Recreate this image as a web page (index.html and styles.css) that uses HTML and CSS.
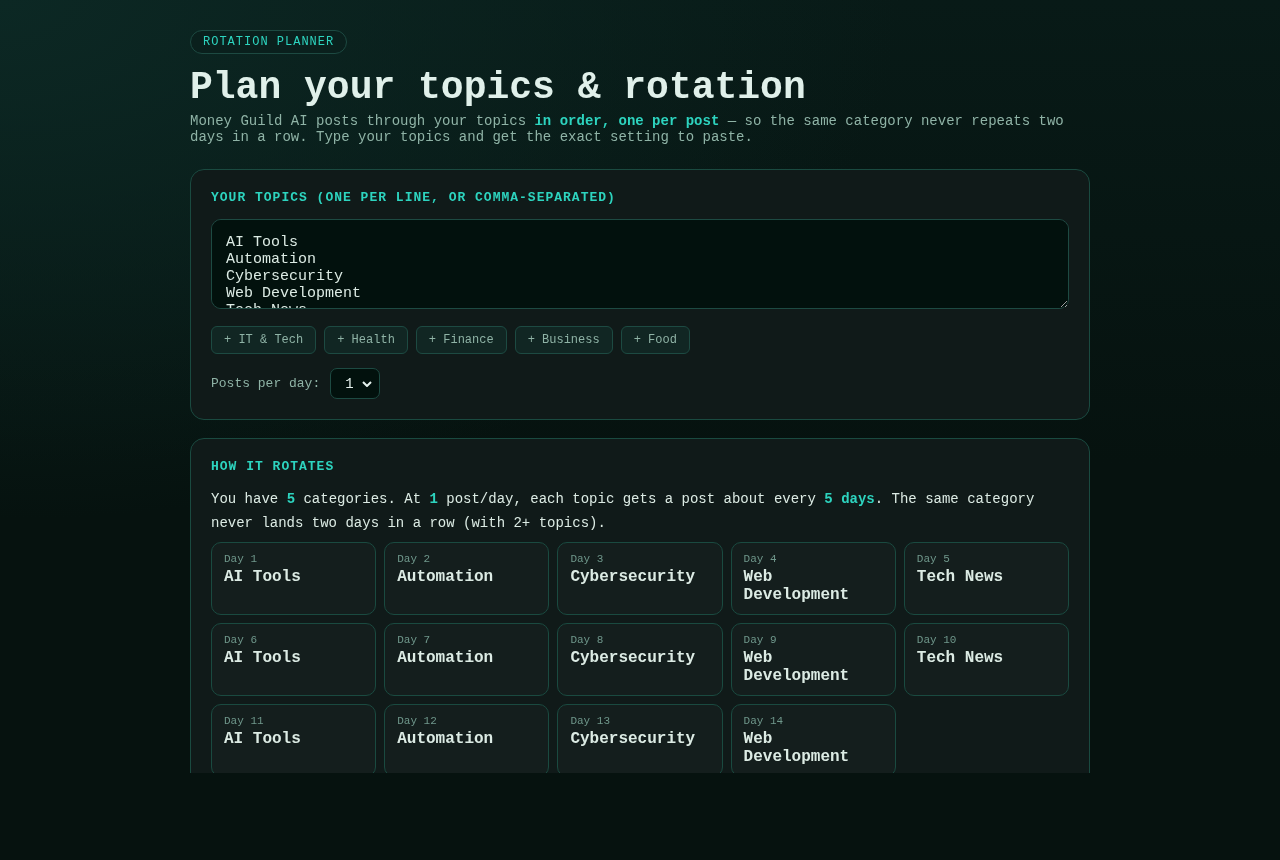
FILE: index.html
```html
<!DOCTYPE html>
<html>
<head>
  <title>Rotation Planner</title>
  <meta name="viewport" content="width=device-width, initial-scale=1">
  <link rel="stylesheet" href="styles.css">
</head>
<body>
  <div class="frame">
    <main class="wrap">
      <span class="pill">ROTATION PLANNER</span>
      <h1>Plan your topics &amp; rotation</h1>
      <p class="lead">Money Guild AI posts through your topics <b>in order, one per post</b> — so the same category never repeats two days in a row. Type your topics and get the exact setting to paste.</p>

      <section class="card">
        <h3>Your topics (one per line, or comma-separated)</h3>
        <textarea class="topics">AI Tools
Automation
Cybersecurity
Web Development
Tech News</textarea>
        <div class="chips">
          <button class="chip">+ IT &amp; Tech</button>
          <button class="chip">+ Health</button>
          <button class="chip">+ Finance</button>
          <button class="chip">+ Business</button>
          <button class="chip">+ Food</button>
        </div>
        <div class="ppd">
          <label for="ppd">Posts per day:</label>
          <select id="ppd"><option>1</option><option>2</option><option>3</option></select>
        </div>
      </section>

      <section class="card">
        <h3>How it rotates</h3>
        <p class="explain">You have <b>5</b> categories. At <b>1</b> post/day, each topic gets a post about every <b>5 days</b>. The same category never lands two days in a row (with 2+ topics).</p>
        <div class="days">
          <div class="day"><small>Day 1</small><strong>AI Tools</strong></div>
          <div class="day"><small>Day 2</small><strong>Automation</strong></div>
          <div class="day"><small>Day 3</small><strong>Cybersecurity</strong></div>
          <div class="day"><small>Day 4</small><strong>Web Development</strong></div>
          <div class="day"><small>Day 5</small><strong>Tech News</strong></div>
          <div class="day"><small>Day 6</small><strong>AI Tools</strong></div>
          <div class="day"><small>Day 7</small><strong>Automation</strong></div>
          <div class="day"><small>Day 8</small><strong>Cybersecurity</strong></div>
          <div class="day"><small>Day 9</small><strong>Web Development</strong></div>
          <div class="day"><small>Day 10</small><strong>Tech News</strong></div>
          <div class="day"><small>Day 11</small><strong>AI Tools</strong></div>
          <div class="day"><small>Day 12</small><strong>Automation</strong></div>
          <div class="day"><small>Day 13</small><strong>Cybersecurity</strong></div>
          <div class="day"><small>Day 14</small><strong>Web Development</strong></div>
        </div>
      </section>
    </main>
  </div>
</body>
</html>
```

FILE: styles.css
```css
html { background:#06120f; }
body { margin:0; font-family:"Liberation Mono","DejaVu Sans Mono",monospace; color:#dcebe4; }
.frame { height:773px; overflow:hidden;
         background:radial-gradient(ellipse 900px 520px at 0 0, #0c2824 0%, #08191a00 100%), linear-gradient(#081a17, #06120f 60%); }
.wrap { max-width:900px; margin:0 auto; padding-top:30px; }

.pill { display:inline-block; font-size:12px; letter-spacing:1px; color:#2dd4bf; line-height:22px;
        padding:0 12px; border:1px solid #1d4a42; border-radius:999px; background:#0a201d; }
h1 { font-size:38px; font-weight:bold; color:#e0f0ea; margin:12px 0 3px; line-height:44px; }
.lead { font-size:14px; color:#8fb3a6; margin:0 0 24px; line-height:16px; }
.lead b { color:#2dd4bf; }

.card { background:#101a19; border:1px solid #1a4a40; border-radius:14px; padding:20px; margin-bottom:18px; }
.card h3 { margin:0; font-size:13px; line-height:15px; letter-spacing:1px; text-transform:uppercase; color:#2dd4bf; }

.topics { display:block; box-sizing:border-box; width:100%; height:90px; margin-top:14px;
          background:#02110d; border:1px solid #1d4a42; border-radius:10px; padding:14px;
          font:15px "Liberation Mono",monospace; color:#dcebe4; scrollbar-width:none; outline:none; }
.chips { display:flex; gap:8px; margin-top:17px; }
.chip { font:12px "Liberation Mono",monospace; color:#8fb3a6; background:#112623; border:1px solid #1d4a42;
        border-radius:6px; height:28px; padding:0 12px; }
.ppd { display:flex; align-items:center; gap:10px; margin-top:14px; font-size:13px; color:#8fb3a6; }
.ppd select { appearance:none; width:50px; height:31px; border:1px solid #1d4a42; border-radius:7px;
              background:#02110d url("data:image/svg+xml,%3Csvg xmlns='http://www.w3.org/2000/svg' width='10' height='6' viewBox='0 0 10 6'%3E%3Cpath d='M1 1l4 4 4-4' fill='none' stroke='%23e6f2ee' stroke-width='2'/%3E%3C/svg%3E") no-repeat right 7px center;
              color:#e6f2ee; font:14px "Liberation Mono",monospace; padding:0 0 0 14px; }

.explain { font-size:14px; line-height:24px; margin:13px 0 7px; color:#dcebe4; }
.explain b { color:#2dd4bf; }
.days { display:grid; grid-template-columns:repeat(5,1fr); gap:8px; }
.day { background:#141e1d; border:1px solid #1a4a40; border-radius:10px; padding:10px 12px; min-height:50px; }
.day small { display:block; font-size:11px; line-height:13px; color:#6f978b; margin-bottom:2px; }
.day strong { display:block; font-size:16px; line-height:18px; color:#dcebe4; }
```
